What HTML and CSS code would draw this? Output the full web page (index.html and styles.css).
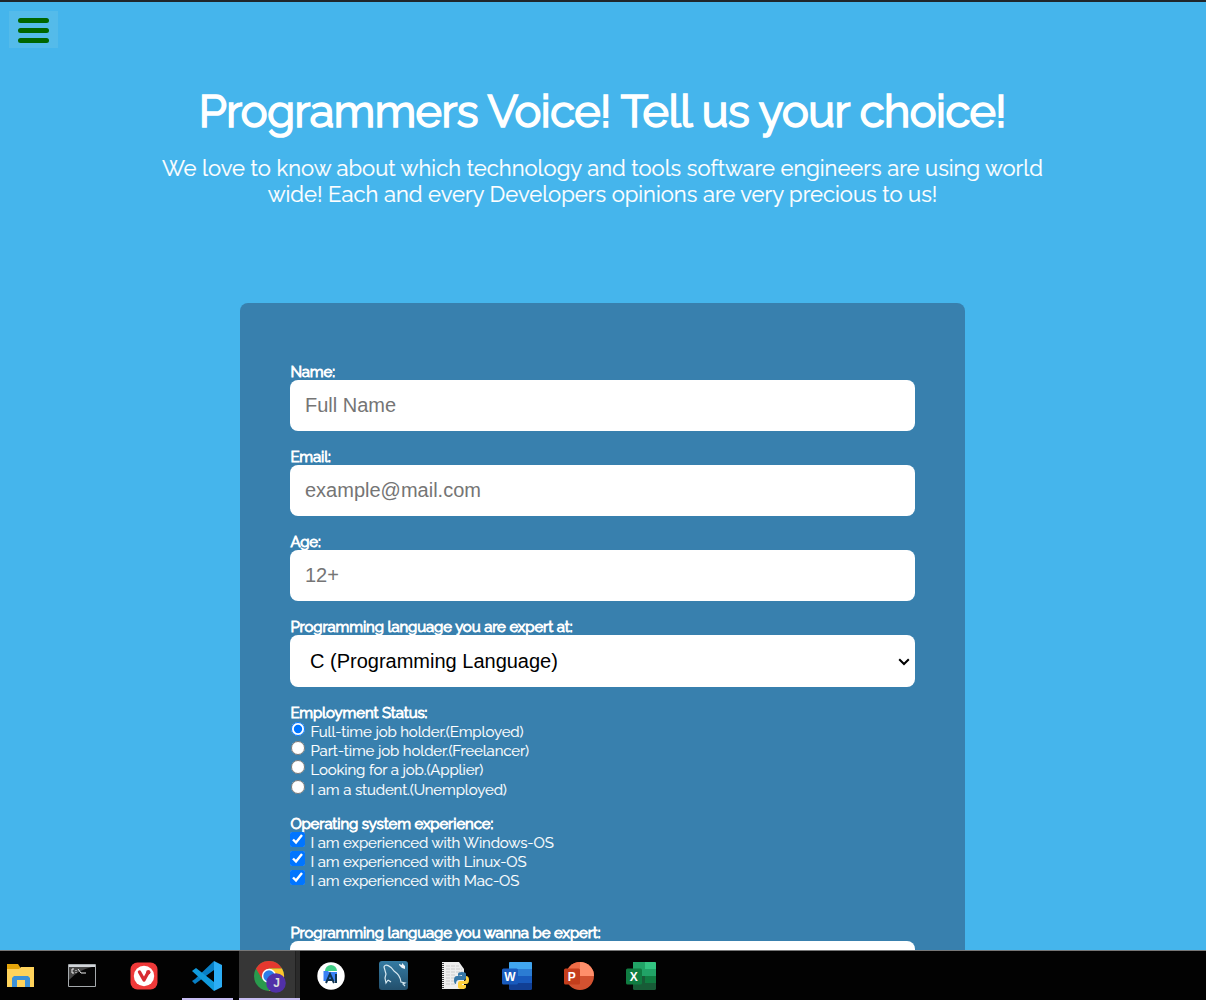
FILE: index.html
```html
<!DOCTYPE html>
<html lang="en">
<head>
<meta charset="utf-8">
<title>Programmers Voice</title>
<link rel="stylesheet" href="styles.css">
</head>
<body>
<div class="screen">
<main class="page">
  <button class="menu" aria-label="Menu"><span></span><span></span><span></span></button>
  <header class="intro">
    <h1>Programmers Voice! Tell us your choice!</h1>
    <p>We love to know about which technology and tools software engineers are using world<br>wide! Each and every Developers opinions are very precious to us!</p>
  </header>
  <form class="survey">
    <div class="field"><label>Name:</label><input class="box" type="text" placeholder="Full Name"></div>
    <div class="field"><label>Email:</label><input class="box" type="email" placeholder="example@mail.com"></div>
    <div class="field"><label>Age:</label><input class="box" type="text" placeholder="12+"></div>
    <div class="field"><label>Programming language you are expert at:</label>
      <div class="choice"><select class="box"><option>C (Programming Language)</option></select>
      <svg class="arrow" width="12" height="8" viewBox="0 0 12 8"><path d="M1.2 1.2 6 6 10.8 1.2" fill="none" stroke="#000" stroke-width="2"/></svg></div></div>
    <div class="group"><div class="legend">Employment Status:</div>
      <label class="option"><input type="radio" name="job" checked><span>Full-time job holder.(Employed)</span></label>
      <label class="option"><input type="radio" name="job"><span>Part-time job holder.(Freelancer)</span></label>
      <label class="option"><input type="radio" name="job"><span>Looking for a job.(Applier)</span></label>
      <label class="option"><input type="radio" name="job"><span>I am a student.(Unemployed)</span></label>
    </div>
    <div class="group systems"><div class="legend">Operating system experience:</div>
      <label class="option"><input type="checkbox" checked><span>I am experienced with Windows-OS</span></label>
      <label class="option"><input type="checkbox" checked><span>I am experienced with Linux-OS</span></label>
      <label class="option"><input type="checkbox" checked><span>I am experienced with Mac-OS</span></label>
    </div>
    <div class="field"><label>Programming language you wanna be expert:</label><input class="box" type="text"></div>
  </form>
</main>
<nav class="taskbar">
  <div class="app files"><svg width="28" height="26" viewBox="0 0 28 26"><path d="M0 1h11l2 3v3H0z" fill="#e5a50a"/><path d="M0 6h12l2-2h13v20H0z" fill="#ffd35b"/><path d="M5 24V15l2-2h14l2 2v9h-5v-7h-8v7z" fill="#3c91d8"/></svg></div>
  <div class="app"><svg width="28" height="24" viewBox="0 0 28 24"><path d="M.5.5h27v22H.5z" fill="#050505" stroke="#a5aaad"/><path d="M1 1h26v2H1z" fill="#d2d6da"/><path d="M1 3h23Q10 6 1 16z" fill="#454545"/><path d="M6 5H4v4h2M8 6v1M8 8v1M10 5l3 4M13 9h5" fill="none" stroke="#eee"/></svg></div>
  <div class="app"><svg width="28" height="28" viewBox="0 0 28 28"><rect x=".5" y=".5" width="27" height="27" rx="7" fill="#ef3939"/><circle cx="14" cy="14" r="10.2" fill="#fff"/><path d="m9.500 10 4.500 8 3.800-7" fill="none" stroke="#d82b31" stroke-width="3.400" stroke-linecap="round" stroke-linejoin="round"/><circle cx="18.300" cy="10.300" r="2.200" fill="#d82b31"/></svg></div>
  <div class="app open"><svg width="30" height="30" viewBox="0 0 30 30"><path d="M22 0 3 18 0 20l3 3 4-3L22 9z" fill="#087fc5"/><path d="m4 7-4 3 22 20V21z" fill="#119bdd"/><path d="m22 0 8 4v22l-8 4z" fill="#2cadf5"/></svg></div>
  <div class="app active"><svg width="32" height="32" viewBox="0 0 32 32"><circle cx="15" cy="15" r="15" fill="#299a4d"/><path d="M2 7.500a15 15 0 0 1 26 0H15L8 18z" fill="#e5382f"/><path d="M28 7.500A15 15 0 0 1 15 30l7-11-7-11.500z" fill="#ffc52c"/><circle cx="15" cy="15" r="7.200" fill="#fff"/><circle cx="15" cy="15" r="5.700" fill="#2b7de9"/><circle cx="22" cy="22" r="9.800" fill="#5130a8"/><text x="22.500" y="26" class="initial">J</text></svg></div>
  <div class="app"><svg width="28" height="28" viewBox="0 0 28 28"><circle cx="14" cy="14" r="13.700" fill="#fff"/><path d="M8 9a5.500 5.500 0 0 1 12 0z" fill="#40cf86"/><path d="M6.500 9H11l1 1h8v9H6.500z" fill="#3981f5"/><path d="m9 21 4-9 4 9M10.500 18h5M19 12v9" fill="none" stroke="#103451" stroke-width="2"/></svg></div>
  <div class="app"><svg width="29" height="29" viewBox="0 0 29 29"><defs><linearGradient id="sea" x2="0" y2="1"><stop stop-color="#347ba3"/><stop offset="1" stop-color="#234f6c"/></linearGradient></defs><rect width="29" height="29" rx="3" fill="url(#sea)"/><path d="M9 19l-2 3-1-5 1-4-2-7c1-4 7-1 10 4 4 3 6 5 7 11l4 1-2 1 2 2M9 19l3 2" fill="none" stroke="#d7e8f0" stroke-width="1.200"/><path d="m20 3 3 1v-2l3 3v3l-3-1-3-3z" fill="#eef5fa"/></svg></div>
  <div class="app"><svg width="29" height="29" viewBox="0 0 29 29"><path d="M1 1h17l5 7v20H1z" fill="#eee"/><path d="M2 2v25" stroke="#444" stroke-width="2" stroke-dasharray="1 1"/><path d="M5 5h13M5 8h16M5 11h17M5 14h10M5 17h9M5 20h9M5 23h10" stroke="#ccc" stroke-dasharray="4 1"/><path d="M17 15v-2q0-2 4-2t4 2v4q0 2-2 2h-5q-3 0-3 4-2 0-2-4t3-4h5v-1z" fill="#3778a9"/><path d="M25 15q3 0 3 4t-3 4h-4v1h4v2q0 2-4 2t-4-2v-4q0-2 2-2h4q2 0 2-2z" fill="#ffd13f"/></svg></div>
  <div class="app"><svg width="30" height="28" viewBox="0 0 30 28"><rect x="7" width="23" height="28" rx="1.500" fill="#113f94"/><path d="M7 14h23v7H7z" fill="#185abd"/><path d="M7 7h23v7H7z" fill="#2b7cd3"/><path d="M8 0h21q1 0 1 1v6H7V1q0-1 1-1" fill="#41a5ee"/><rect y="6.500" width="16" height="16" rx="1.500" fill="#185abd"/><text x="7.800" y="18.500" class="badge">W</text></svg></div>
  <div class="app"><svg width="30" height="28" viewBox="0 0 30 28"><circle cx="16" cy="14" r="14" fill="#d35230"/><path d="M16 0a14 14 0 0 0-14 14h14z" fill="#ed6c47"/><path d="M16 0a14 14 0 0 1 14 14H16z" fill="#ff8f6b"/><rect y="6.500" width="16" height="16" rx="1.500" fill="#c43e1c"/><text x="7.800" y="18.500" class="badge">P</text></svg></div>
  <div class="app"><svg width="30" height="28" viewBox="0 0 30 28"><rect x="7" width="23" height="28" rx="1.500" fill="#185c37"/><path d="M7 0h12v14H7z" fill="#21a366"/><path d="M19 0h10q1 0 1 1v6H19z" fill="#33c481"/><path d="M19 7h11v7H19z" fill="#21a366"/><path d="M19 14h11v7H19z" fill="#107c41"/><rect y="6.500" width="16" height="16" rx="1.500" fill="#107c41"/><text x="7.800" y="18.500" class="badge">X</text></svg></div>
</nav>
</div>
</body>
</html>
```
FILE: styles.css
```css
* { box-sizing: border-box; }
body { margin: 0; background: #45b5ec; color: #fff; font-family: Raleway, Lato, sans-serif; }
.screen { height: 1000px; display: flex; flex-direction: column; overflow: hidden; }
.page { height: 950px; flex: none; overflow: hidden; border-top: 2px solid #20262b; }
.menu { display: flex; flex-direction: column; gap: 5px; width: 49px; height: 37px; margin: 9px 0 0 9px; padding: 7px 9px; border: 0; background: #54bbea; }
.menu span { width: 31px; height: 5px; flex: none; border-radius: 3px; background: #060; }
.intro { width: 1205px; height: 255px; padding-top: 38px; text-align: center; white-space: nowrap; }
h1 { margin: 0; font-size: 45px; line-height: 52px; font-weight: 400; letter-spacing: -0.48px; -webkit-text-stroke: 1.7px #fff; }
.intro p { margin: 17px 0 0; font-size: 22px; line-height: 26px; -webkit-text-stroke: 0.2px #fff; }
.survey { width: 725px; height: 800px; margin: 0 auto 0 240px; padding: 60px 50px 0; border-radius: 8px; background: #3880ae; font-size: 15px; }
.field { margin-bottom: 17px; }
.field > label, .legend { display: block; width: max-content; height: 17px; padding-left: 0.4px; line-height: 18px; font-weight: 400; letter-spacing: -0.13px; -webkit-text-stroke: 0.85px #fff; white-space: nowrap; }
.box { display: block; width: 625px; height: 51px; margin: 0; padding: 0 15px; border: 0; border-radius: 8px; background: #fff; color: #000; font: 20px "Liberation Sans", Arial, sans-serif; }
.box::placeholder { color: #757575; }
select.box { height: 52px; padding-left: 20px; appearance: none; }
.choice { position: relative; }
.arrow { position: absolute; right: 5px; top: 23px; }
.group { margin-bottom: 16px; }
.group .legend { margin-bottom: 1px; }
.group.systems { margin-bottom: 34px; }
.option { display: flex; align-items: flex-start; width: max-content; height: 19px; line-height: 20px; letter-spacing: -0.13px; -webkit-text-stroke: 0.15px #fff; white-space: nowrap; }
.option:nth-of-type(3) { margin-bottom: 1px; }
.option input { width: 14px; height: 14px; margin: 0 6px 0 0.5px; }
.systems .option { margin-bottom: 0; }
.systems .option input { width: 15px; height: 15px; margin: -1px 5px 0 0.4px; }
.taskbar { height: 50px; flex: none; display: flex; border-top: 1px solid #777; background: #020202; }
.app { width: 62px; display: flex; align-items: center; justify-content: center; flex: none; }
.files { width: 51px; padding-right: 9px; }
.app svg { display: block; }
.open, .active { width: 51px; margin-left: 7px; padding-top: 2px; border-bottom: 2px solid #c6bcf2; }
.open { padding-right: 2px; }
.active { width: 61px; margin-left: 6px; padding-top: 4px; background: linear-gradient(to right, #363636 56px, #202020 56px, #202020 57px, #2b2b2b 57px); }
.initial { font: bold 12px "Liberation Sans", sans-serif; fill: #ddd; text-anchor: middle; }
.badge { font: bold 12px "Liberation Sans", sans-serif; fill: #fff; text-anchor: middle; }
```
